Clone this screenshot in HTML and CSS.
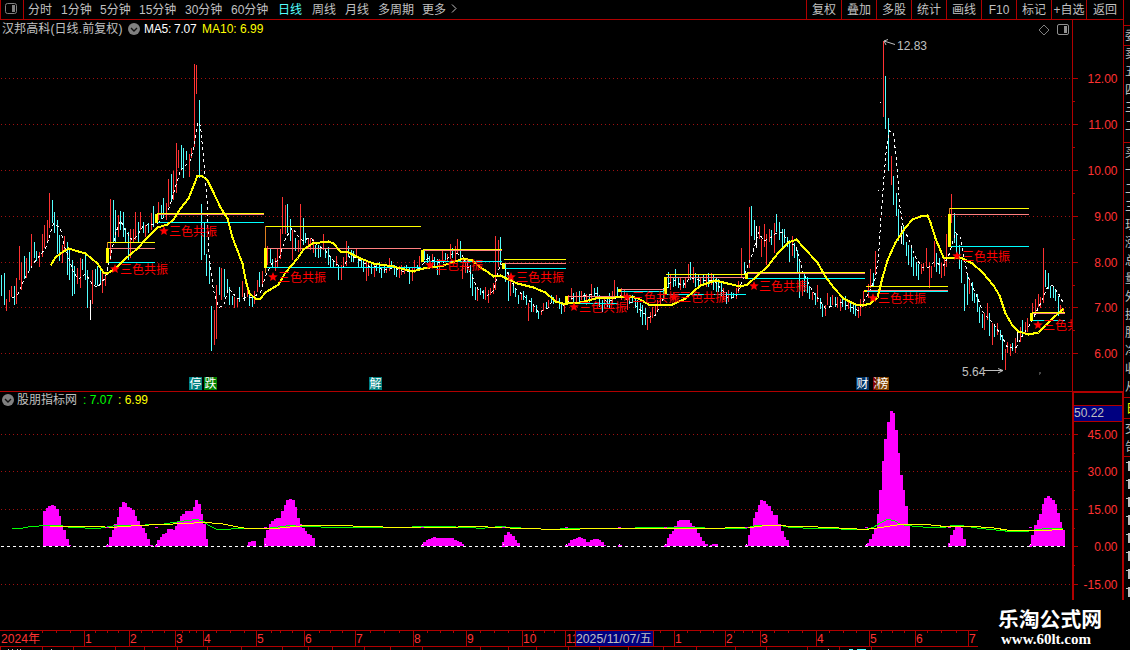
FILE: index.html
```
<!DOCTYPE html>
<html lang="zh-CN">
<head>
    <meta charset="UTF-8">
    <meta name="viewport" content="width=device-width, initial-scale=1.0">
    <title>汉邦高科 日线</title>
    <link rel="stylesheet" href="styles.css">
</head>
<body>
    <header class="topbar">
        <div class="layout-btn">
            <svg width="12" height="11" viewBox="0 0 12 11"><rect x="0.5" y="0.5" width="11" height="10" rx="2" fill="none" stroke="#808080"/><rect x="7" y="2" width="3" height="7" fill="#808080"/></svg>
        </div>
        <nav class="periods">
            <a>分时</a><a>1分钟</a><a>5分钟</a><a>15分钟</a><a>30分钟</a><a>60分钟</a><a class="active">日线</a><a>周线</a><a>月线</a><a>多周期</a><a>更多</a>
            <svg width="6" height="9" viewBox="0 0 6 9"><path d="M1 0.5L5 4.5L1 8.5" fill="none" stroke="#c0c0c0"/></svg>
        </nav>
        <nav class="tools">
            <a>复权</a><a>叠加</a><a>多股</a><a>统计</a><a>画线</a><a>F10</a><a>标记</a><a>+自选</a><a class="last">返回</a>
        </nav>
    </header>

    <main class="stage">
        <div class="charts">
            <section class="panel price">
                <svg id="priceChart" width="1072" height="371" viewBox="0 20 1072 371"></svg>
                <div class="legend">
                    <span class="name">汉邦高科(日线.前复权)</span>
                    <svg class="drop" width="12" height="12" viewBox="0 0 12 12"><circle cx="6" cy="6" r="6" fill="#808080"/><path d="M3 5L6 8L9 5" fill="none" stroke="#111" stroke-width="1.4"/></svg>
                    <span class="ma5">MA5: 7.07</span>
                    <span class="ma10">MA10: 6.99</span>
                </div>
                <div class="panel-icons">
                    <svg width="12" height="12" viewBox="0 0 12 12"><path d="M6 1L11 6L6 11L1 6Z" fill="none" stroke="#808080"/></svg>
                    <svg width="12" height="11" viewBox="0 0 12 11"><rect x="0.5" y="0.5" width="11" height="10" rx="1.5" fill="none" stroke="#909090"/><rect x="7" y="2" width="3" height="7" fill="#909090"/></svg>
                </div>
            </section>
            <section class="panel indicator">
                <svg id="subChart" width="1072" height="209" viewBox="0 391 1072 209"></svg>
                <div class="legend">
                    <svg class="drop" width="12" height="12" viewBox="0 0 12 12"><circle cx="6" cy="6" r="6" fill="#808080"/><path d="M3 5L6 8L9 5" fill="none" stroke="#111" stroke-width="1.4"/></svg>
                    <span class="name">股朋指标网</span>
                    <span class="green">: 7.07</span>
                    <span class="yellow">: 6.99</span>
                </div>
            </section>
        </div>
        <svg id="scale" width="51" height="580" viewBox="1072 20 51 580"></svg>
        <svg id="side" width="7" height="580" viewBox="1123 20 7 580"></svg>
    </main>

    <footer class="bottom">
        <svg id="dateAxis" width="978" height="50" viewBox="0 600 978 50"></svg>
        <div class="watermark">
            <strong>乐淘公式网</strong>
            <span>www.60lt.com</span>
        </div>
    </footer>

    <script src="chart.js"></script>
</body>
</html>
```
FILE: styles.css
```
* {
    margin: 0;
    padding: 0;
    box-sizing: border-box;
}

body {
    width: 1130px;
    height: 650px;
    overflow: hidden;
    background: #000;
    color: #c0c0c0;
    font: 12px "Liberation Sans", "Noto Sans CJK SC", sans-serif;
}

svg {
    display: block;
}

svg text {
    font: 12px "Liberation Sans", "Noto Sans CJK SC", sans-serif;
}

/* 顶部工具栏 */
.topbar {
    display: flex;
    width: 1124px;
    height: 20px;
    border-right: 1px solid #b00000;
    border-bottom: 1px solid #b00000;
    line-height: 20px;
    white-space: nowrap;
}

.layout-btn {
    width: 24px;
    padding: 3px 0 0 4px;
    border-left: 1px solid #b00000;
    border-right: 1px solid #b00000;
}

.periods {
    display: grid;
    grid-template-columns: 33px 39px 39px 46px 46px 47px 34px 33px 33px 44px 28px 8px;
    padding-left: 4px;
}

.periods svg {
    margin: 4px 0 0 1px;
}

.periods .active {
    color: #54ffff;
}

.tools {
    display: flex;
    margin-left: auto;
}

.tools a {
    width: 35px;
    height: 19px;
    border-left: 1px solid #b00000;
    text-align: center;
}

.tools .last {
    width: 37px;
}

/* 图表 */
.stage {
    display: flex;
    height: 580px;
}

.charts {
    width: 1072px;
}

.panel {
    position: relative;
}

.legend {
    position: absolute;
    top: 0;
    left: 2px;
    display: flex;
    align-items: center;
    height: 18px;
    line-height: 18px;
    white-space: nowrap;
}

.legend span {
    height: 18px;
}

.price .name {
    width: 126px;
    letter-spacing: 0.1px;
}

.price .ma5 {
    width: 58px;
    margin-left: 4px;
    color: #fff;
    letter-spacing: -0.25px;
}

.ma10,
.yellow {
    color: #ff0;
}

.indicator .name {
    width: 66px;
    margin-left: 3px;
}

.green {
    width: 35px;
    color: #0f0;
}

.panel-icons {
    position: absolute;
    top: 4px;
    right: 3px;
    display: flex;
    gap: 7px;
}

.crisp {
    shape-rendering: crispEdges;
}

/* 底部日期 */
.bottom {
    display: flex;
    height: 50px;
}

.watermark {
    display: flex;
    flex-direction: column;
    width: 145px;
    padding: 6px 0 0 20px;
    color: #fff;
    white-space: nowrap;
}

.watermark strong {
    font-family: "Noto Sans CJK SC", sans-serif;
    font-size: 20.8px;
    line-height: 24px;
}

.watermark span {
    padding: 1px 0 0 3px;
    font: bold 15px/16px "Liberation Serif", serif;
}
```
FILE: chart.js
```
const RED = '#b00000';
const COLORS = { r: '#ff3232', c: '#54ffff', w: '#ffffff' };

// K线：x 最高 最低 颜色
const bars = `
1 275 296 c,4 273 305 c,6 299 311 r,9 290 302 r,11 286 297 r,14 286 305 c,16 278 304 r,19 246 280 r,21 262 290 r,24 256 279 c,
26 258 278 r,29 252 271 c,31 234 266 r,34 242 258 c,36 251 261 c,39 252 267 r,42 234 257 r,44 225 248 r,47 220 242 r,49 193 228 r,
52 200 223 c,54 212 233 c,57 220 254 c,59 235 261 c,62 245 263 r,64 236 250 r,67 242 275 c,69 248 280 c,72 260 296 c,74 266 294 c,
77 268 284 r,80 258 288 r,82 259 270 c,85 254 280 c,87 270 308 c,90 300 320 w,92 270 304 r,95 269 285 c,97 266 286 c,100 266 283 c,
102 273 293 r,105 272 286 r,110 199 260 r,113 200 242 c,115 210 243 c,118 215 237 r,120 211 230 c,123 212 237 c,125 228 243 c,128 232 260 c,
130 229 258 r,133 229 243 r,135 212 240 r,138 222 242 c,140 212 230 r,143 222 233 c,145 225 237 r,148 223 233 c,151 213 230 r,153 206 227 c,
158 202 220 r,161 205 219 c,163 198 218 c,166 203 220 r,168 179 207 r,171 174 202 c,173 171 200 r,176 143 193 r,178 150 168 r,181 145 170 c,
183 148 178 c,186 151 160 c,189 154 177 r,191 148 158 r,194 64 147 r,196 65 94 r,199 100 178 c,201 204 260 c,204 222 255 c,206 254 276 c,
209 262 284 c,211 306 351 c,214 310 345 r,216 285 339 r,219 267 295 c,221 268 300 r,224 269 297 c,227 279 290 c,229 287 305 c,232 296 305 c,
234 297 308 r,237 298 307 r,239 287 302 c,242 281 297 r,244 293 301 w,247 284 297 r,249 293 306 c,252 296 307 c,254 291 304 r,257 280 292 r,
259 272 287 c,262 271 287 r,267 246 265 r,270 249 263 c,272 259 268 c,275 258 271 r,277 248 267 r,280 229 259 r,282 197 234 r,285 205 234 r,
287 204 233 c,290 219 241 c,292 230 260 r,295 238 251 c,298 240 252 r,300 204 251 r,303 218 245 c,305 233 243 c,308 238 248 r,310 238 250 r,
313 239 253 r,315 245 257 c,318 245 258 c,320 246 257 c,323 234 250 r,325 248 258 c,328 247 265 c,330 256 267 c,333 260 267 c,336 256 266 r,
338 265 280 c,341 265 280 r,343 257 268 r,346 241 266 r,348 246 257 c,351 250 262 c,353 251 262 c,356 248 258 r,358 257 267 c,361 258 267 c,
363 259 272 c,366 262 281 r,368 261 276 r,371 262 274 c,374 264 277 r,376 263 271 c,379 262 273 c,381 267 278 c,384 266 273 c,386 267 273 r,
389 258 271 r,391 261 268 c,394 265 275 c,396 266 277 c,399 266 278 r,401 265 275 r,404 266 274 r,406 265 271 c,409 268 284 c,412 267 281 r,
414 260 273 r,417 265 270 c,419 256 270 r,424 250 260 c,427 254 263 c,429 256 266 c,432 254 267 r,434 257 268 c,437 259 275 c,439 259 275 r,
442 249 262 r,445 253 260 c,447 254 262 r,450 244 259 r,452 248 258 c,455 246 260 r,457 239 253 r,460 241 260 c,462 265 279 r,465 258 273 r,
467 259 273 c,470 265 288 c,472 274 296 c,475 287 300 c,477 287 301 r,480 288 295 c,483 290 299 c,485 287 300 r,488 290 303 r,490 288 295 r,
493 283 294 r,495 236 290 r,498 240 267 r,500 237 265 c,505 263 282 c,508 272 301 c,510 280 296 r,513 285 293 c,515 288 297 c,518 295 304 c,
521 293 300 r,523 291 300 c,526 295 305 c,528 303 321 r,531 298 312 c,533 304 312 r,536 305 313 c,538 311 319 c,541 310 315 r,543 303 311 r,
546 302 309 c,548 300 307 r,551 295 302 c,553 297 304 c,556 295 303 r,559 298 309 c,561 302 314 c,564 303 312 r,568 295 302 r,571 288 300 r,
573 293 303 c,576 292 304 r,579 291 304 c,581 291 300 r,584 293 303 c,586 294 305 r,589 295 302 c,591 284 300 r,594 288 297 c,597 287 298 c,
599 295 307 c,602 300 312 c,604 297 309 r,607 296 307 c,609 293 308 c,612 291 303 r,614 280 297 r,617 287 297 c,621 288 300 r,624 290 298 r,
627 299 310 r,629 295 304 c,632 295 303 c,635 298 308 c,637 300 313 c,640 303 317 c,642 305 325 c,645 308 325 c,647 317 330 r,650 312 323 r,
652 307 318 r,655 305 316 r,657 300 312 r,660 295 306 r,663 288 300 c,668 272 288 c,670 274 290 r,673 277 287 c,675 269 286 c,678 277 288 c,
680 278 290 r,683 280 288 c,685 278 288 r,688 264 280 r,690 262 280 c,693 267 283 r,695 273 287 c,698 275 287 c,700 277 287 r,703 275 286 c,
706 274 287 r,708 273 287 c,711 273 285 r,713 275 290 c,716 277 292 c,718 279 292 c,721 283 296 c,723 288 300 r,726 292 304 c,728 290 302 r,
731 292 299 c,733 293 298 c,736 288 299 r,738 281 293 r,741 248 277 r,744 262 273 c,749 207 268 r,751 206 236 c,754 220 240 c,756 226 248 w,
759 226 239 r,761 239 257 r,764 224 247 r,766 234 265 r,769 229 242 r,771 230 245 c,774 223 253 r,776 214 232 c,779 222 240 c,782 229 247 c,
784 229 243 c,787 237 247 c,789 240 262 c,792 236 256 r,794 243 258 c,797 250 272 c,799 260 298 c,802 280 296 r,804 272 292 c,807 277 293 c,
809 286 299 c,812 292 300 r,815 293 305 c,817 285 302 r,820 298 309 c,822 304 317 c,825 305 316 r,827 293 305 r,830 297 306 c,832 295 305 r,
835 297 307 c,837 297 308 r,840 299 311 r,842 298 307 c,845 296 310 c,848 301 309 r,850 301 312 c,853 305 314 c,855 304 316 c,858 307 318 r,
860 299 316 r,863 291 307 r,868 284 298 r,870 269 288 r,873 273 287 c,875 251 275 r,883 41 117 r,885 76 129 c,888 118 171 c,891 156 185 r,
893 176 205 c,896 193 216 c,898 209 241 c,901 226 244 w,903 226 245 c,906 242 256 c,908 245 265 c,911 247 267 c,913 257 276 c,916 262 276 c,
918 264 280 c,921 264 274 r,923 263 271 r,926 248 267 r,929 262 288 r,931 266 278 r,934 241 267 r,936 253 272 c,939 258 274 c,941 263 278 r,
944 258 276 r,946 234 267 r,951 194 223 r,954 213 243 c,956 234 253 c,959 245 269 c,961 260 283 c,964 284 311 c,967 275 305 c,969 278 294 r,
972 282 301 c,974 293 303 c,977 294 312 c,979 307 323 c,982 314 328 c,984 313 330 r,987 303 320 r,989 313 336 c,992 323 345 r,994 325 337 c,
997 323 335 r,1000 330 340 c,1002 335 360 c,1005 349 370 r,1007 342 353 r,1010 344 356 r,1012 343 351 c,1015 338 353 r,1017 332 342 w,1020 327 342 r,
1022 320 335 c,1025 322 333 r,1027 318 332 r,1032 303 320 r,1035 299 313 r,1038 294 307 r,1040 297 308 r,1043 248 303 r,1045 270 287 c,1048 273 289 c,
1050 286 298 c,1053 287 298 c,1055 290 301 c,1058 296 316 c,1060 305 313 r,1063 308 314 r`;

const ma5 = '12,297 17,295 23,280 33,263 45,248 53,223 60,228 63,243 68,257 73,272 78,279 85,273 92,284 97,287 105,277 110,257 115,233 120,220 125,230 132,240 137,235 143,225 157,223 167,213 173,193 180,170 190,160 194,143 197,122 200,125 203,157 207,203 208,250 213,290 218,307 223,305 228,288 237,298 252,297 260,292 266,273 272,262 278,260 285,238 292,227 297,235 302,240 310,237 317,245 325,250 335,263 342,267 350,255 360,260 370,267 377,266 383,270 393,267 403,271 413,271 420,267 427,258 442,263 453,252 462,255 468,268 477,288 487,295 493,290 500,263 507,272 515,288 523,295 532,303 538,312 547,308 553,298 563,305 573,297 597,293 607,302 620,295 635,305 648,317 655,315 662,300 668,283 675,280 682,286 690,277 700,280 713,280 722,290 727,297 735,297 743,277 752,253 758,232 763,240 768,239 775,233 782,232 788,242 795,245 803,273 813,292 825,308 833,305 840,302 858,310 868,293 875,277 878,257 880,223 883,183 886,147 889,130 893,133 897,170 899,203 903,227 910,243 915,257 922,267 928,267 933,262 943,265 949,253 955,232 960,237 967,275 977,297 983,313 993,323 1002,337 1007,347 1015,348 1022,335 1030,323 1040,303 1047,287 1052,285 1058,293 1063,303';

const ma10 = '50,265 55,257 60,253 68,248 78,251 85,253 97,263 103,272 107,273 115,268 125,258 137,248 147,237 157,227 167,224 173,219 180,208 188,198 194,183 197,175 201,175 207,180 212,190 220,207 227,218 232,237 242,263 246,283 249,293 255,298 260,298 265,292 278,284 285,272 297,258 303,249 312,243 320,242 328,241 333,243 340,251 348,252 360,258 373,263 393,266 412,271 423,268 443,265 463,258 472,260 480,267 488,272 493,276 500,275 508,279 517,283 533,287 545,292 555,301 562,303 567,303 580,302 595,298 615,297 630,296 638,298 648,304 672,304 685,298 700,285 715,280 727,283 740,286 747,284 757,275 767,266 778,252 788,242 796,239 803,247 817,262 825,276 833,287 843,298 855,304 862,305 870,303 877,297 882,277 887,260 895,242 905,227 912,219 920,216 927,215 930,222 935,238 943,257 950,257 960,257 972,263 982,272 993,285 999,295 1005,313 1012,325 1018,331 1028,334 1038,332 1050,320 1063,308';

// 三色线：起点 终点 黄 粉 青 柱顶 柱底
const boxes = [
    [107, 155, 242, 248, 262, 248, 263],
    [156, 264, 213, 214, 222, 214, 223],
    [265, 421, 226, 248, 267, 248, 268],
    [422, 502, 249, 250, 261, 250, 262],
    [503, 566, 259, 263, 268, 263, 269],
    [566, 618, 0, 296, 303, 296, 304],
    [619, 665, 0, 289, 291, 289, 292],
    [665, 746, 274, 277, 294, 277, 295],
    [746, 865, 272, 273, 278, 273, 279],
    [865, 948, 286, 290, 291, 290, 292],
    [949, 1029, 208, 214, 246, 214, 247],
    [1031, 1065, 312, 313, 320, 313, 321]
];

// 三色共振 标记位置
const signals = [[115, 269], [164, 231], [273, 277], [430, 265], [511, 277], [574, 307], [627, 297], [674, 297], [754, 286], [873, 298], [957, 256], [1038, 325]];

const badges = [[189, '停', '#008080'], [204, '跌', '#008000'], [369, '解', '#008080'], [856, '财', '#003366'], [873, '涨', '#800000'], [876, '榜', '#804000']];

// 指标柱：x,顶 ... 结束x
const hills = [
    '43,511 46,508 48,506 51,505 54,506 56,509 59,516 61,525 63,530 66,539 69,545 71',
    '106,545 109,537 112,530 114,524 117,517 119,507 122,502 125,503 127,507 130,508 132,510 135,516 137,521 140,526 142,528 145,533 147,539 150,545 153',
    '155,545 157,540 160,537 162,534 165,533 167,529 173,530 175,526 177,521 180,516 182,514 185,511 193,507 195,500 198,504 201,514 203,524 206,539 208',
    '247,545 248,542 251,541 256',
    '264,538 266,530 269,524 271,521 274,519 276,518 281,511 284,505 286,500 289,499 292,500 295,507 297,518 300,524 302,528 305,531 307,534 310,535 312,538 315',
    '421,545 423,542 426,540 428,539 431,538 433,537 436,538 454,540 457,541 459,542 462,544 464',
    '502,542 504,535 507,532 510,534 512,536 515,540 517,543 520',
    '565,545 568,543 570,540 573,539 576,538 578,537 581,538 583,539 586,542 590,540 593,539 599,540 601,542 604,545 606',
    '618,545 622',
    '665,544 667,538 669,534 672,531 674,526 677,521 679,520 690,523 692,526 695,529 697,533 700,537 702,541 705,544 708',
    '710,545 712,544 718',
    '745,545 748,535 750,528 753,518 755,512 758,505 760,500 763,501 766,504 768,506 771,511 773,515 778,524 781,531 784,537 786,540 789',
    '865,545 867,543 869,539 872,534 874,529 877,514 879,490 882,461 884,439 887,422 890,411 893,413 895,430 898,453 900,475 903,490 905,506 908,524 910',
    '948,543 950,535 953,530 955,526 961,528 963,539 966',
    '1029,545 1031,535 1034,525 1037,520 1039,514 1042,504 1044,498 1047,496 1050,498 1052,500 1055,504 1057,513 1060,522 1062,530 1065'
];

const subGreen = '11,528 20,528 30,526 48,525 60,525 70,527 98,528 115,525 130,525 160,524 180,521 195,519 202,520 207,524 212,527 217,529 245,528 265,528 290,525 300,526 340,527 400,527 423,526 440,526 470,527 480,528 500,526 510,527 550,529 570,528 610,528 660,527 680,527 728,528 745,528 755,525 780,525 790,527 815,528 865,529 873,527 880,522 887,519 894,520 900,524 915,526 930,527 943,527 952,525 960,525 980,528 1010,531 1025,531 1045,528 1062,528';
const subYellow = '49,526 98,526 110,527 137,525 160,524 185,523 202,522 220,523 240,527 247,528 275,528 305,525 340,525 365,526 400,527 440,527 476,526 520,528 560,529 600,528 640,528 700,528 750,527 765,525 805,526 830,527 865,529 880,527 900,524 925,524 945,526 970,526 990,527 1010,530 1040,530 1063,529';

function rect(x, y, w, h, fill) {
    return `<rect class="crisp" x="${x}" y="${y}" width="${w}" height="${h}" fill="${fill}"/>`;
}

function dots(y, width) {
    return `<path class="crisp" d="M1 ${y + 0.5}H${width}" stroke="#a01010" stroke-dasharray="1 3"/>`;
}

function line(points, color, width, extra = '') {
    return `<polyline class="crisp" points="${points}" transform="translate(.5 .5)" fill="none" stroke="${color}" stroke-width="${width}" ${extra}/>`;
}

function text(x, y, str, color, extra = '') {
    return `<text x="${x}" y="${y}" fill="${color}" ${extra}>${str}</text>`;
}

function star(cx, cy) {
    let pts = '';
    for (let i = 0; i < 10; i++) {
        const r = i % 2 ? 2.2 : 5;
        const a = Math.PI * (i / 5 - 0.5);
        pts += `${(cx + r * Math.cos(a)).toFixed(1)},${(cy + r * Math.sin(a)).toFixed(1)} `;
    }
    return `<polygon points="${pts}" fill="#f00"/>`;
}

// 主图
function drawPrice() {
    let s = '';
    [78, 124, 170, 216, 262, 307, 353].forEach(y => s += dots(y, 1072));
    bars.trim().split(',').forEach(b => {
        const [x, hi, lo, c] = b.trim().split(' ');
        s += rect(x, hi, 1, lo - hi, COLORS[c]);
    });
    s += rect(265, 226, 1, 47, '#e08020') + rect(107, 242, 1, 6, '#e08020') + rect(949, 208, 1, 6, '#e08020');
    s += rect(880, 102, 1, 1, '#fff') + rect(878, 190, 1, 1, '#fff');
    s += line(ma5, '#fff', 1, 'stroke-dasharray="3 3"');
    boxes.forEach(([x1, x2, y, p, c, top, bottom]) => {
        s += rect(x1, c, x2 - x1, 1, '#00ffff');
        s += rect(x1, p, x2 - x1, 1, '#ff8080');
        if (y) s += rect(x1 + 1, y, x2 - x1 - 1, 1, '#ff0');
        s += rect(x1 - 1, top, 3, bottom - top, '#ff0');
    });
    s += line(ma10, '#ff0', 2);
    signals.forEach(([x, y]) => s += star(x, y) + text(x + 5, y + 5, '三色共振', '#f00'));
    badges.forEach(([x, t, bg]) => s += rect(x, 377, 13, 13, bg) + text(x + 0.5, 388, t, '#fff'));
    s += '<path d="M895 44.5L884 41M888 39.5L884 41L886 45M984 370.5H1003M998 368.5L1003 370.5L998 373" fill="none" stroke="#c0c0c0"/>';
    s += text(897, 50, '12.83', '#c0c0c0') + text(962, 376, '5.64', '#c0c0c0');
    s += rect(1039, 372, 2, 2, '#444') + rect(1039, 374, 1, 1, '#444');
    document.getElementById('priceChart').innerHTML = s;
}

// 副图
function drawSub() {
    let s = rect(0, 391, 1072, 1, RED);
    [434, 471, 509, 584].forEach(y => s += dots(y, 1072));
    hills.forEach(h => {
        const p = h.split(' ');
        const end = p.pop();
        let d = `M${p[0].split(',')[0]} 546`;
        p.forEach(v => {
            const [x, y] = v.split(',');
            d += `H${x}V${y}`;
        });
        s += `<path class="crisp" d="${d}H${end}V546Z" fill="#f0f"/>`;
    });
    s += line(subGreen, '#0f0', 1) + line(subYellow, '#ff0', 1);
    [107, 156, 265, 422, 503, 566, 619, 665, 746, 866, 949, 1030].forEach(x => {
        s += rect(x - 1, 527, 3, 1, '#f0f') + rect(x - 1, 545, 3, 2, '#f0f') + rect(x, 544, 1, 1, '#fff');
    });
    s += '<path class="crisp" d="M1 546.5H1065" stroke="#fff" stroke-dasharray="3 3"/>';
    document.getElementById('subChart').innerHTML = s;
}

// 右侧刻度
function drawScale() {
    let s = rect(1072, 20, 1, 371, RED);
    [78, 124, 170, 216, 262, 307, 353].forEach((y, i) => {
        s += rect(1072, y, 6, 1, RED) + text(1117.5, y + 5, (12 - i) + '.00', '#ff3232', 'text-anchor="end"');
        if (i < 6) s += rect(1072, y + 23, 3, 1, RED);
    });
    s += rect(1072, 391, 51, 2, RED) + rect(1072, 391, 2, 209, RED) + rect(1122, 391, 1, 209, RED);
    s += rect(1074, 405, 48, 17, RED) + rect(1074, 406, 48, 15, '#000080') + text(1074, 417, '50.22', '#c0c0c0');
    [434, 471, 509, 546, 584].forEach((y, i) => {
        s += rect(1072, y, 6, 1, RED) + text(1117.5, y + 5, (45 - i * 15) + '.00', '#ff3232', 'text-anchor="end"');
        if (i < 4) s += rect(1073, y + 19, 2, 1, RED);
    });
    document.getElementById('scale').innerHTML = s;

    // 行情侧栏左缘
    let side = rect(1123, 20, 1, 580, RED);
    [25, 45, 142, 397, 418, 456].forEach(y => side += rect(1124, y, 6, 1, RED));
    ['委', '卖', '五', '四', '三', '二'].forEach((t, i) => side += text(1125, 40 + i * 18, t, '#c0c0c0'));
    ['买', '一', '二', '三', '现', '涨', '总', '量', '外', '换', '股', '净', '收', '从'].forEach((t, i) => side += text(1125, 157 + i * 18, t, '#c0c0c0'));
    side += text(1126, 413, '日', '#ff0') + text(1125, 433, '交', '#c0c0c0') + text(1125, 451, '告', '#c0c0c0');
    for (let y = 461; y < 600; y += 18) side += rect(1126, y + 1, 2, 1, '#c0c0c0') + rect(1128, y, 2, 10, '#c0c0c0');
    document.getElementById('side').innerHTML = side;
}

// 日期轴
function drawDates() {
    let s = rect(0, 630, 978, 1, RED) + rect(0, 646, 978, 1, RED);
    const months = [[84, 1], [129, 2], [175, 3], [203, 4], [256, 5], [304, 6], [355, 7], [413, 8], [466, 9], [522, 10], [565, 11], [674, 1], [725, 2], [760, 3], [816, 4], [869, 5], [915, 6], [968, 7]];
    months.forEach(([x, m]) => s += rect(x, 631, 1, 15, RED) + text(x + 1, 643, m, '#ff3232'));
    [42, 56, 70, 95, 107, 118, 141, 152, 164, 182, 189, 196, 216, 230, 244, 271, 280, 292, 319, 330, 342, 370, 384, 399, 427, 440, 453, 480, 494, 508, 533, 544, 554, 660, 687, 700, 713, 734, 743, 752, 774, 788, 802, 829, 843, 856, 881, 892, 904, 927, 941, 956].forEach(x => s += rect(x, 631, 1, 2, RED));
    [0, 42, 73, 115, 144, 177, 207, 241, 282, 308, 332, 364, 390, 422, 480, 508, 536, 568, 599, 628, 663, 696, 735, 766, 807, 839, 871].forEach(x => s += rect(x, 647, 1, 3, RED));
    s += text(1, 643, '2024年', '#ff3232', 'textLength="39" lengthAdjust="spacingAndGlyphs"');
    s += rect(575, 631, 79, 15, RED) + rect(576, 631, 77, 15, '#000080');
    s += text(576, 643, '2025/11/07/五', '#c0c0c0', 'textLength="76" lengthAdjust="spacingAndGlyphs"');
    [8, 12, 17, 20, 51, 828].forEach(x => s += rect(x, 649, 1, 1, '#c0c0c0'));
    s += rect(849, 649, 4, 1, '#54ffff') + rect(857, 649, 9, 1, '#54ffff');
    document.getElementById('dateAxis').innerHTML = s;
}

drawPrice();
drawSub();
drawScale();
drawDates();
```
